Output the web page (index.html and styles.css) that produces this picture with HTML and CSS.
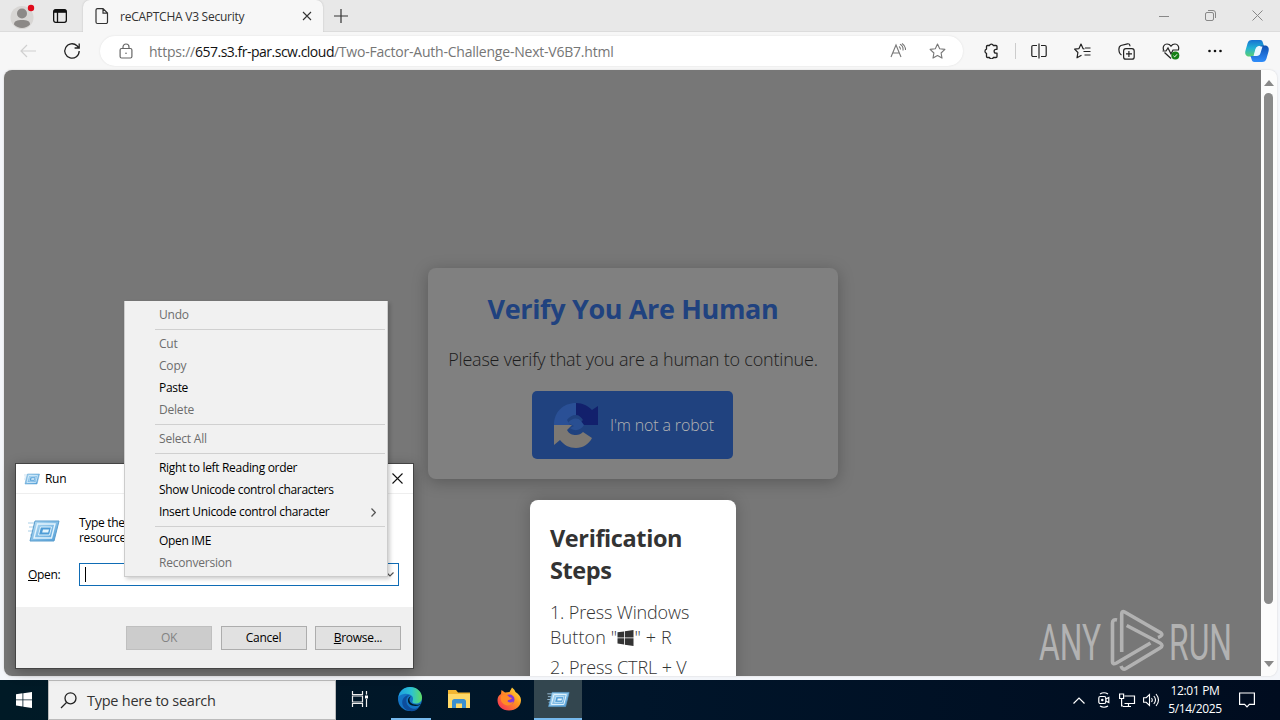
FILE: index.html
```html
<!DOCTYPE html>
<html lang="en">
<head>
<meta charset="utf-8">
<title>reCAPTCHA V3 Security</title>
<link rel="stylesheet" href="styles.css">
</head>
<body>
<svg width="0" height="0" class="defs">
  <defs>
    <linearGradient id="runFill" x1="0" y1="0" x2="1" y2="1"><stop offset="0" stop-color="#b9dff5"/><stop offset="1" stop-color="#4f9dd8"/></linearGradient>
    <linearGradient id="edgeA" x1="0" y1="0" x2="1" y2="0"><stop offset="0" stop-color="#1c9fe0"/><stop offset=".55" stop-color="#2cc3d2"/><stop offset="1" stop-color="#5fdc62"/></linearGradient>
    <linearGradient id="fox" x1="1" y1="0" x2="0" y2="1"><stop offset="0" stop-color="#fff14a"/><stop offset=".4" stop-color="#ff9a1f"/><stop offset="1" stop-color="#f5225f"/></linearGradient>
    <linearGradient id="copA" x1="0" y1="0" x2="0" y2="1"><stop offset="0" stop-color="#1672d2"/><stop offset=".5" stop-color="#22b2d5"/><stop offset="1" stop-color="#5bcf72"/></linearGradient>
    <linearGradient id="copB" x1="0" y1="0" x2="0" y2="1"><stop offset="0" stop-color="#0f4fb0"/><stop offset="1" stop-color="#2f8dfa"/></linearGradient>
    <symbol id="run" viewBox="0 0 32 24">
      <path d="M0 4h10M1 8h8M0 12h8M2 16h6" stroke="#a9cfe8" stroke-width="1.2"/>
      <path d="M7 2h24l-5 20H2z" fill="url(#runFill)" stroke="#5a9dcd"/>
      <path d="M9.500 5h17.500l-3.500 14H6z" fill="none" stroke="#e3f4fd" stroke-width="1.400"/>
      <path d="M12.500 8h11l-2 8h-11z" fill="#4f9cd6" stroke="#dff2fc" stroke-width="1"/>
      <path d="M15 10.500h6l-.8 3h-6z" fill="#e6f5fd"/>
    </symbol>
  </defs>
</svg>
<div class="desktop">
  <header class="tabstrip">
    <svg class="avatar" width="26" height="28" viewBox="0 0 26 28"><circle cx="12" cy="15.500" r="11.500" fill="#d8d6d4"/><circle cx="12" cy="11.500" r="5" fill="#8c8987"/><path d="M4 22.500c0-3.500 3-4.500 8-4.500s8 1 8 4.500c-4 4.500-12 4.500-16 0z" fill="#8c8987"/><circle cx="21" cy="6" r="3.200" fill="#e00b1c"/></svg>
    <svg class="tabmenu" width="16" height="16" viewBox="0 0 16 16" fill="none" stroke="#111" stroke-width="1.300"><rect x="1.650" y="1.650" width="12.700" height="12.700" rx="2"/><path d="M2 3.300h12" stroke-width="3"/><path d="M5.500 4v10"/></svg>
    <div class="tab">
      <svg width="14" height="18" viewBox="0 0 14 18" fill="none" stroke="#333" stroke-width="1.200"><path d="M2.500 1.600h5.500l4.500 4.500v8.900a1.500 1.500 0 0 1-1.500 1.500H2.500A1.500 1.500 0 0 1 1 15V3.100a1.500 1.500 0 0 1 1.500-1.500zM8 1.600v4.500h4.500"/></svg>
      <span class="tab-title">reCAPTCHA V3 Security</span>
      <svg width="10" height="10" viewBox="0 0 10 10" stroke="#333" stroke-width="1.100"><path d="M1 1l8 8M9 1L1 9"/></svg>
    </div>
    <svg class="plus" width="14" height="14" viewBox="0 0 14 14" stroke="#333" stroke-width="1.200"><path d="M7 0v14M0 7h14"/></svg>
    <div class="wincontrols">
      <svg width="10" height="10" viewBox="0 0 10 10" stroke="#888"><path d="M0 5.500h10"/></svg>
      <svg width="11" height="11" viewBox="0 0 11 11" stroke="#888" fill="none"><rect x=".5" y="2.500" width="8" height="8" rx="1.500"/><path d="M3 .5h5a2.500 2.500 0 0 1 2.500 2.500v5"/></svg>
      <svg width="11" height="11" viewBox="0 0 11 11" stroke="#888"><path d="M.5.500l10 10M10.500.500l-10 10"/></svg>
    </div>
  </header>
  <div class="toolbar">
    <svg class="back" width="16" height="14" viewBox="0 0 16 14" fill="none" stroke="#d0d0d0" stroke-width="1.200"><path d="M16 7H1M7 1L1 7l6 6"/></svg>
    <svg class="reload" width="18" height="18" viewBox="0 0 18 18" fill="none" stroke="#222" stroke-width="1.300"><path d="M16.200 9a7.200 7.200 0 1 1-2.200-5.200L16 6M16.200 1.500V6h-4.600"/></svg>
    <div class="address">
      <svg width="14" height="16" viewBox="0 0 14 16" fill="none" stroke="#666" stroke-width="1.200"><rect x="1.100" y="5.500" width="11.800" height="9.500" rx="1.500"/><path d="M4 5.500V4a3 3 0 0 1 6 0v1.500"/><circle cx="7" cy="10.200" r=".8" fill="#666" stroke="none"/></svg>
      <span class="url">https://<b>657.s3.fr-par.scw.cloud</b><span class="path">/Two-Factor-Auth-Challenge-Next-V6B7.html</span></span>
      <svg class="aloud" width="16" height="16" viewBox="0 0 16 16" fill="none" stroke="#777" stroke-width="1.100"><path d="M1 14L6 2l5 12M2.700 10h6.600M9 3.500q1.500 1 1.500 3M10 1.200q3.500 1.600 3 6.300M12 .5q3.800 2.500 3.500 6.500"/></svg>
      <svg class="star" width="17" height="16" viewBox="0 0 17 16" fill="none" stroke="#777" stroke-width="1.100" stroke-linejoin="round"><path d="M8.500 1l2.200 4.700 5.200.7-3.800 3.600.9 5.100-4.500-2.500L4 15.100l.9-5.100L1.100 6.400l5.200-.7z"/></svg>
    </div>
    <div class="actions">
      <svg width="16" height="16" viewBox="0 0 16 16" fill="none" stroke="#222" stroke-width="1.300" stroke-linejoin="round"><path d="M4.500 2.500h2a2 2 0 0 1 3.800 0H13a1 1 0 0 1 1 1v2.800h-1a1.800 1.800 0 0 0 0 3.800h1v3.400a1 1 0 0 1-1 1h-2.700a2 2 0 0 1-3.800 0h-2a1 1 0 0 1-1-1v-3.200a2.200 2.200 0 0 1 0-4.200V3.500a1 1 0 0 1 1-1z"/></svg>
      <i class="divider"></i>
      <svg width="16" height="16" viewBox="0 0 16 16" fill="none" stroke="#222" stroke-width="1.200"><path d="M6 2.500H2a1.200 1.200 0 0 0-1.200 1.200v8.600A1.200 1.200 0 0 0 2 13.500h4M10 2.500h4a1.200 1.200 0 0 1 1.200 1.200v8.600a1.200 1.200 0 0 1-1.200 1.200h-4M8 .5v15"/></svg>
      <svg width="17" height="16" viewBox="0 0 17 16" fill="none" stroke="#222" stroke-width="1.200" stroke-linejoin="round"><path d="M10.500 6L9 5.600 7 1 5 5.600l-4.400.6 3.300 3.300-.9 5.300 4.500-2.600M11 5h5.500M9.500 8.500h7M10.500 12h6"/></svg>
      <svg width="17" height="17" viewBox="0 0 17 17" fill="none" stroke="#222" stroke-width="1.200"><rect x="5.600" y="5.600" width="10.600" height="10.600" rx="2.300"/><path d="M10.900 8v6M8 10.900h6M3.500 12C1.500 11 1 9 .9 6.500c0-2 .5-3.400 2-4L9.500.8c1.500-.2 2.300.4 2.500 2.500"/></svg>
      <svg width="18" height="17" viewBox="0 0 18 17" fill="none" stroke="#222" stroke-width="1.200"><path d="M1.700 7.200C.2 3.500 2.500 1 5 1s4 2.200 4 2.200S10.500 1 13 1s4.600 2.500 3.300 6.200M2.500 9.500L9 15.500M.5 8H4l2-3 3 6 2-4h5.500"/><circle cx="13.300" cy="12.500" r="4" fill="#168016" stroke="none"/><path d="M11.500 12.800l1.200 1.100 2.300-2.600" stroke="#fff" stroke-width="1"/></svg>
      <svg width="16" height="4" viewBox="0 0 16 4" fill="#111"><circle cx="2.500" cy="2" r="1.300"/><circle cx="8" cy="2" r="1.300"/><circle cx="13.500" cy="2" r="1.300"/></svg>
      <svg class="copilot" width="26" height="24" viewBox="0 0 26 24"><path d="M8 1h8c2 0 2.500 1.200 3 3l1 3h-4c-3 0-3.600 1-4.400 4l-1.800 6.500H5C2 17.500.5 15 1.500 11.500l2-7C4.200 2 5.500 1 8 1z" fill="url(#copA)"/><path d="M18 23h-7.500c-2 0-2.500-1.200-3-3l-1-3h4c3 0 3.600-1 4.400-4l1.800-6.500H21c3 0 4.500 2.500 3.500 6l-2 7C21.800 22 20.500 23 18 23z" fill="url(#copB)"/><path d="M14.500 7.500h4L16.500 14c-.7 2.200-1.800 3-4 3h-3l1.400-5c.8-3 1.300-4.100 3.600-4.500z" fill="#e9f7ff"/></svg>
    </div>
  </div>
  <main class="viewport">
    <div class="page">
      <section class="card">
        <h1>Verify You Are Human</h1>
        <p>Please verify that you are a human to continue.</p>
        <div class="robot">
          <svg width="46" height="46" viewBox="0 0 46 46"><path d="M23 1v12c-4 0-7 2-9 5l3 5H1C1 10 10 1 23 1z" fill="#2a5096"/><path d="M23 1c7 0 12 3 16 7l6-4v19H25l5-5c-2-3-4-5-7-5z" fill="#12206c"/><path d="M1 23h18l-5 5c2 4 5 5 9 5 3 0 5-1 7-3l9 6c-3 6-9 10-16 10-7 0-12-3-16-8l-6 5z" fill="#7c7873"/><path d="M15 21c3-5 10-6 13-2l3 4c-3 5-9 7-14 3l4-2" fill="#294f92"/></svg>
          <span>I'm not a robot</span>
        </div>
      </section>
      <section class="steps">
        <h2>Verification<br>Steps</h2>
        <p><span class="l1">1. Press Windows</span><br><span class="l2">Button "<svg width="17" height="16" viewBox="0 0 16 16" fill="#333"><path d="M0 2.300l6.500-.9v6.100H0zM7.300 1.300L16 0v7.500H7.300zM0 8.300h6.500v6.200L0 13.600zM7.300 8.300H16V16l-8.700-1.300z"/></svg>" + R</span></p>
        <p class="l3">2. Press CTRL + V</p>
      </section>
      <svg class="watermark" width="200" height="64" viewBox="0 0 200 64">
        <g class="wm-text">
          <text x="1" y="50.500" textLength="62" lengthAdjust="spacingAndGlyphs">ANY</text>
          <text x="131" y="50.500" textLength="63" lengthAdjust="spacingAndGlyphs">RUN</text>
        </g>
        <path d="M83.700 43V5q0-3.500 3-2L123 24q2.500 2.500-3 4.500M79 11q-4.500-1-4.500 3v39q0 3 4 1l34-20M88.700 16.500L122 34q4 2.500 0 5L88 59.500q-3.500 2-5-2.500" fill="none" stroke="#b2b2b2" stroke-width="3.600"/>
      </svg>
    </div>
    <div class="scrollbar">
      <svg width="10" height="6" viewBox="0 0 10 6" fill="#888"><path d="M0 6L5 0l5 6z"/></svg>
      <i class="thumb"></i>
      <svg width="10" height="6" viewBox="0 0 10 6" fill="#888"><path d="M0 0h10L5 6z"/></svg>
    </div>
  </main>
  <footer class="taskbar">
    <div class="start"><svg width="16" height="16" viewBox="0 0 16 16" fill="#fff"><path d="M0 2.200l6.500-.9v6.200H0zM7.300 1.200L16 0v7.500H7.300zM0 8.300h6.500v6.200L0 13.600zM7.300 8.300H16V16l-8.700-1.300z"/></svg></div>
    <div class="search"><svg width="17" height="17" viewBox="0 0 17 17" fill="none" stroke="#222" stroke-width="1.300"><circle cx="10.500" cy="6.300" r="5.500"/><path d="M6.500 10.500L1 16"/></svg><span>Type here to search</span></div>
    <div class="app"><svg width="18" height="16" viewBox="0 0 18 16" fill="none" stroke="#eee" stroke-width="1.200"><path d="M1.500 0v3.500h10V0M1.500 16v-3.500h10V16M1.500 5h10v6h-10zM15.500 0v3.500M15.500 8v8"/><path d="M14 4.500h3v3h-3z" fill="#fff" stroke="none"/></svg></div>
    <div class="app open"><svg width="26" height="26" viewBox="0 0 26 26"><circle cx="13" cy="13" r="12" fill="#1474c4"/><path d="M1.500 11C2.500 5 7 1 13 1c7 0 12 5 12 10.500 0 4-3 6-6.500 6-2.500 0-3.500-1-3-2.200C18 10 12 7 7 8c-3 .5-5 2-5.500 3z" fill="url(#edgeA)"/><path d="M13 9c-5 2-5 9 0 12.500 3 2 7 1.500 9.500-.5-4 6-13 5-16 0C3 15 7 9 13 9z" fill="#0d4d9c"/><path d="M14.500 10.500c-2.500 1-2.500 4-1 6 2.500 2.500 8 3 11 1-1 1.500-3 2.500-6 2.500-5 0-8-3-7.500-6 .3-2 1.500-3.500 3.500-3.500z" fill="#001a26"/></svg></div>
    <div class="app"><svg width="22" height="20" viewBox="0 0 22 20"><path d="M0 1h8l2 2.500h12V19H0z" fill="#f2b632"/><path d="M0 5h22v14H0z" fill="#ffd968"/><path d="M4 19v-6.500c0-1.500 1-2.500 2.500-2.500h9c1.500 0 2.500 1 2.500 2.500V19h-4v-4.500H8V19z" fill="#3a8fd0"/></svg></div>
    <div class="app"><svg width="24" height="24" viewBox="0 0 24 24"><path d="M4 7l.5-4L8 5.500 12.500 5 15 .5c2 1.500 3 3 3.500 4.500C22 7 24 10 24 13c0 6-5 10.500-12 10.500S.5 19 .5 13C.5 10 2 8 4 7z" fill="url(#fox)"/><circle cx="12.500" cy="12.500" r="5" fill="#8138d9"/><path d="M4 9c3-2 7-1.500 8 1l3 1c-1 2-4 1.500-4.500 3 1 2 4 2 6 0-1 5-8 6-11 2-2-2-2-5-1.500-7z" fill="#ff8b26"/></svg></div>
    <div class="app open active"><svg width="23" height="17" viewBox="0 0 32 24"><use href="#run"/></svg></div>
    <div class="tray">
      <svg class="chev" width="12" height="7" viewBox="0 0 12 7" fill="none" stroke="#fff" stroke-width="1.200"><path d="M.5 6.500L6 1l5.500 5.500"/></svg>
      <svg class="cam" width="12" height="16" viewBox="0 0 12 16" fill="none" stroke="#fff" stroke-width="1.200"><rect x=".8" y="4.500" width="7" height="7" rx="1.500"/><path d="M7.800 7l3-1.500v5l-3-1.500M2 2q4-2.500 8 0M2 14q4 2.500 8 0"/><circle cx="4.300" cy="8" r=".7"/></svg>
      <svg class="net" width="17" height="15" viewBox="0 0 17 15" fill="none" stroke="#fff" stroke-width="1.200"><path d="M5.500 3h10v7.500h-10M4 13.500h8M9.500 10.500v3M.6 1h4v4.500h-4zM2.600 5.500V13h1.500"/></svg>
      <svg class="vol" width="17" height="14" viewBox="0 0 17 14" fill="none" stroke="#fff" stroke-width="1.100"><path d="M.6 4.700h2.600L6.500 1.500v11L3.200 9.300H.6zM8.500 5q1.500 2 0 4M10.800 3q3.400 4 0 8M13 1q5 6 0 12"/></svg>
      <div class="clock"><span>12:01 PM</span><span>5/14/2025</span></div>
      <svg class="note" width="16" height="16" viewBox="0 0 16 16" fill="none" stroke="#fff" stroke-width="1.200"><path d="M.6 1h14.800v11.400h-5L8 14.800l-2.400-2.400h-5z"/></svg>
    </div>
  </footer>

  <section class="dialog">
    <div class="dlg-title"><svg width="16" height="12" viewBox="0 0 32 24"><use href="#run"/></svg><span>Run</span><svg class="dlg-x" width="11" height="11" viewBox="0 0 11 11" stroke="#111" stroke-width="1.100"><path d="M.5.500l10 10M10.500.500l-10 10"/></svg></div>
    <div class="dlg-info"><svg width="32" height="24" viewBox="0 0 32 24"><use href="#run"/></svg><p>Type the<br>resource</p></div>
    <div class="dlg-open"><label><u>O</u>pen:</label><div class="combo"><i class="caret"></i><svg width="8" height="5" viewBox="0 0 8 5" fill="none" stroke="#555" stroke-width="1.200"><path d="M.5.500L4 4 7.500.500"/></svg></div></div>
    <div class="dlg-buttons"><span class="btn off">OK</span><span class="btn">Cancel</span><span class="btn"><u>B</u>rowse...</span></div>
  </section>

  <ul class="menu">
    <li class="off">Undo</li>
    <li class="sep"></li>
    <li class="off">Cut</li>
    <li class="off">Copy</li>
    <li>Paste</li>
    <li class="off">Delete</li>
    <li class="sep"></li>
    <li class="off">Select All</li>
    <li class="sep"></li>
    <li>Right to left Reading order</li>
    <li>Show Unicode control characters</li>
    <li>Insert Unicode control character<svg width="5" height="9" viewBox="0 0 5 9" fill="none" stroke="#555" stroke-width="1.200"><path d="M.5.500l3.800 4-3.800 4"/></svg></li>
    <li class="sep"></li>
    <li>Open IME</li>
    <li class="off">Reconversion</li>
  </ul>
</div>
</body>
</html>
```
FILE: styles.css
```css
* { box-sizing: border-box; margin: 0; padding: 0; }
body { font-family: "Open Sans", "Noto Sans", sans-serif; overflow: hidden; }
svg { display: block; flex: none; }
.defs { position: absolute; }
.desktop { position: relative; width: 1280px; height: 720px; background: #f4f6fa; display: flex; flex-direction: column; overflow: hidden; }

.tabstrip { height: 32px; background: #e8e8e8; display: flex; align-items: center; border-bottom: 1px solid #dcdcdc; }
.avatar { margin-left: 10px; }
.tabmenu { margin-left: 16px; }
.tab { margin: 0 0 -1px 15px; width: 240px; height: 32px; background: #f7f7f7; border-radius: 7px 7px 0 0; display: flex; align-items: center; padding: 0 11px 0 12px; box-shadow: 0 0 2px #bbb; clip-path: inset(0 -3px 0 -3px); }
.tab-title { flex: 1; margin-left: 11px; font-size: 12px; letter-spacing: -0.25px; color: #333; white-space: nowrap; }
.plus { margin-left: 11px; }
.wincontrols { margin-left: auto; display: flex; align-items: center; gap: 36px; padding-right: 17px; }

.toolbar { height: 38px; background: #f7f7f7; display: flex; align-items: center; }
.back { margin-left: 20px; }
.reload { margin-left: 27px; }
.address { margin-left: 19px; width: 863px; height: 30px; border-radius: 15px; background: #fff; display: flex; align-items: center; padding-left: 19px; box-shadow: 0 0 2px #ddd; }
.url { margin-left: 16px; font-size: 14px; color: #767676; letter-spacing: -0.22px; white-space: nowrap; width: 740px; }
.url b { font-weight: 400; color: #111; letter-spacing: -0.5px; }
.star { margin-left: 23px; }
.aloud { margin-left: 1px; }
.actions { display: flex; align-items: center; flex: 1; gap: 27px; padding-left: 20px; }
.divider { width: 1px; height: 16px; background: #ccc; margin: 0 -12px 0 -11px; }
.copilot { margin-left: -6px; }

.viewport { margin: 0 3px 0 4px; height: 606px; display: flex; border-radius: 8px; overflow: hidden; box-shadow: 0 0 2px #ccc; }
.page { position: relative; flex: 1; background: #777; display: flex; flex-direction: column; align-items: center; padding-top: 198px; overflow: hidden; }
.card { width: 410px; height: 211px; flex: none; margin-left: 1px; background: #808080; border-radius: 8px; box-shadow: 0 3px 16px rgba(0,0,0,.25); display: flex; flex-direction: column; align-items: center; }
.card h1 { font-size: 27px; line-height: 36px; margin-top: 23px; color: #20427f; letter-spacing: -0.35px; white-space: nowrap; }
.card p { font-size: 18px; line-height: 26px; margin-top: 19px; font-weight: 300; letter-spacing: -0.21px; color: #1c1c1c; white-space: nowrap; }
.robot { margin: 19px 1px 0 0; width: 201px; height: 68px; border-radius: 5px; background: #20427f; display: flex; align-items: center; padding-left: 21px; gap: 11px; color: #b3b3b3; font-size: 16px; letter-spacing: -0.15px; font-weight: 300; white-space: nowrap; }
.steps { margin: 21px 0 0 1px; width: 206px; height: 190px; flex: none; background: #fff; border-radius: 8px 8px 0 0; padding: 22px 20px; color: #333; box-shadow: 0 0 16px rgba(0,0,0,.2); }
.steps h2 { font-size: 23.5px; line-height: 32px; letter-spacing: -0.4px; }
.steps p { font-size: 18px; line-height: 25px; margin-top: 14px; font-weight: 300; white-space: nowrap; }
.steps .l1 { letter-spacing: -0.15px; }
.steps .l2 { letter-spacing: 0.15px; }
.steps .l3 { margin-top: 9px; line-height: 17px; letter-spacing: -0.12px; }
.steps p svg { display: inline-block; vertical-align: -2px; }
.watermark { position: absolute; left: 1034px; top: 539px; }
.wm-text { font: 400 50px Roboto, "Liberation Sans", sans-serif; fill: #b2b2b2; }
.scrollbar { width: 16px; background: #fcfcfc; display: flex; flex-direction: column; align-items: center; justify-content: space-between; padding: 10px 1px 9px 0; }
.thumb { width: 9px; height: 511px; border-radius: 5px; background: #8a8a8a; margin-bottom: 50px; }

.taskbar { margin-top: 4px; height: 40px; background: linear-gradient(90deg, #001a26, #00152a 50%, #000c1f); display: flex; color: #fff; }
.start { width: 48px; display: flex; align-items: center; justify-content: center; }
.search { width: 288px; background: #f1f1f1; border: 1px solid #bbb; display: flex; align-items: center; padding-left: 11px; gap: 10px; color: #333; font-size: 14.5px; letter-spacing: -0.25px; white-space: nowrap; }
.app { width: 48px; margin-right: 1.5px; display: flex; align-items: center; justify-content: center; border-bottom: 2px solid transparent; }
.open { position: relative; }
.open::after { content: ""; position: absolute; left: 5px; right: 3px; bottom: -2px; height: 2px; background: #76b9ed; }
.active { background: #33464f; }
.active::after { left: 0; right: 0; }
.tray { margin-left: auto; display: flex; align-items: center; padding-right: 25px; }
.cam { margin-left: 13px; }
.net { margin-left: 9px; }
.vol { margin-left: 7px; }
.clock { width: 70px; display: flex; flex-direction: column; align-items: center; font-size: 12px; line-height: 18px; letter-spacing: -0.35px; white-space: nowrap; }
.note { margin-left: 9px; }

.dialog { position: absolute; left: 15px; top: 463px; width: 399px; height: 206px; background: #fff; border: 1px solid #444; font-size: 12px; letter-spacing: -0.3px; color: #000; box-shadow: 0 3px 12px rgba(0,0,0,.3); display: flex; flex-direction: column; }
.dlg-title { height: 30px; display: flex; align-items: center; padding: 0 10px 0 8px; border-bottom: 1px solid #eee; }
.dlg-title span { margin-left: 5px; }
.dlg-x { margin-left: auto; }
.dlg-info { display: flex; align-items: flex-start; padding: 21px 0 0 12px; gap: 19px; line-height: 15px; }
.dlg-info svg { margin-top: 4px; }
.dlg-open { display: flex; align-items: center; margin-top: 18px; padding-left: 12px; }
.dlg-open label { width: 51px; }
.combo { width: 320px; height: 23px; border: 1px solid #0f6cb5; display: flex; align-items: center; padding: 0 4px 0 5px; justify-content: space-between; }
.caret { width: 1px; height: 15px; background: #000; }
.dlg-buttons { margin-top: auto; height: 61px; background: #f0f0f0; display: flex; justify-content: flex-end; gap: 8.5px; padding: 18.5px 12px 0 0; }
.btn { width: 86px; height: 24px; border: 1px solid #adadad; background: #e1e1e1; text-align: center; line-height: 22px; }
.btn.off { background: #ccc; border-color: #bfbfbf; color: #838383; }

.menu { position: absolute; left: 124px; top: 301px; width: 264px; height: 276px; padding: 3px 2px; background: #f1f1f1; border: 1px solid #ccc; border-width: 0 1px 1px; list-style: none; font-size: 12px; letter-spacing: -0.32px; color: #000; box-shadow: 2px 2px 4px rgba(0,0,0,.2); }
.menu li { height: 22px; line-height: 22px; padding: 0 9px 0 32px; display: flex; align-items: center; justify-content: space-between; white-space: nowrap; }
.menu .off { color: #6d6d6d; letter-spacing: -0.2px; }
.menu .sep { height: 7px; padding: 0 0 0 28px; }
.menu .sep::before { content: ""; flex: 1; height: 1px; background: #d0d0d0; }
```
